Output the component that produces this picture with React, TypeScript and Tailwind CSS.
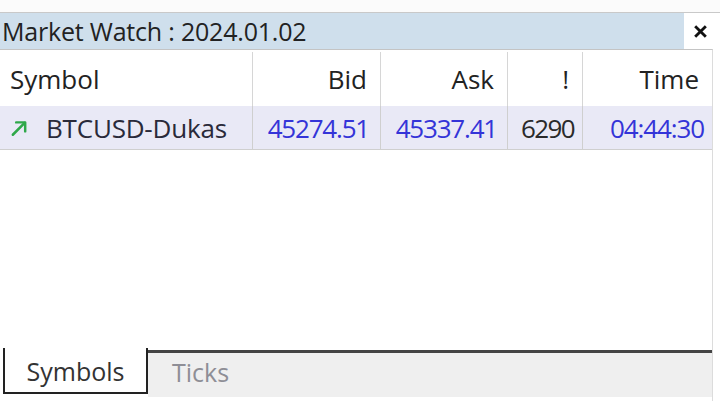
const font = { fontFamily: '"Open Sans", "Noto Sans", sans-serif' };

function UpArrow() {
  return (
    <svg width="18" height="18" viewBox="0 0 16 16" className="shrink-0">
      <path d="M2.5 14 L13 3.5" stroke="#2fa84a" strokeWidth="2.2" strokeLinecap="round" fill="none" />
      <path d="M5.5 3 H13.5 V11" stroke="#2fa84a" strokeWidth="2.2" strokeLinecap="round" strokeLinejoin="round" fill="none" />
    </svg>
  );
}

const cols = [
  { label: "Bid", w: "w-[128px]" },
  { label: "Ask", w: "w-[127px]" },
  { label: "!", w: "w-[75px]" },
  { label: "Time", w: "w-[130px]" },
];

export default function App() {
  return (
    <div className="w-[720px] h-[401px] bg-white flex flex-col overflow-hidden text-[#222]" style={font}>
      <div className="h-[13px] bg-[#fbfbfb] border-b border-[#c9c9c9] shrink-0" />
      <div className="h-[36px] flex items-stretch shrink-0">
        <div className="w-[684px] bg-[#cfdfec] flex items-center pl-[2px] text-[25px] leading-none tracking-[-0.2px]">
          Market Watch : 2024.01.02
        </div>
        <div className="flex-1 flex items-center justify-center pr-[4px]">
          <svg width="13" height="13" viewBox="0 0 12 12">
            <path d="M2 2 L10 10 M10 2 L2 10" stroke="#111" strokeWidth="2.6" strokeLinecap="square" />
          </svg>
        </div>
      </div>
      <div className="flex-1 flex flex-col w-[713px] border-r border-[#dcdcdc] border-t border-t-[#c4c4c4]">
        <div className="h-[56px] flex text-[26px] leading-none pt-[2px]">
          <div className="w-[252px] flex items-center pl-[10px]">Symbol</div>
          {cols.map((c) => (
            <div key={c.label} className={`${c.w} border-l border-[#d6d6d6] flex items-center justify-end pr-[13px]`}>
              {c.label}
            </div>
          ))}
        </div>
        <div className="h-[44px] flex bg-[#e9e9f6] border-b border-[#cfcfcf] text-[26px] leading-none">
          <div className="w-[252px] flex items-center pl-[10px] gap-[18px] pt-[1px]">
            <UpArrow />
            <span className="text-[#2a2a3a] tracking-[-0.2px]">BTCUSD-Dukas</span>
          </div>
          <div className="w-[128px] border-l border-[#cfcfcf] flex items-center justify-end pr-[11px] text-[#3434d8] tracking-[-1.2px]">45274.51</div>
          <div className="w-[127px] border-l border-[#cfcfcf] flex items-center justify-end pr-[10px] text-[#3434d8] tracking-[-1.2px]">45337.41</div>
          <div className="w-[75px] border-l border-[#cfcfcf] flex items-center justify-end pr-[8px] text-[#2a2a2a] tracking-[-1.6px]">6290</div>
          <div className="w-[130px] border-l border-[#cfcfcf] flex items-center justify-end pr-[8px] text-[#3434d8] tracking-[-1.1px]">04:44:30</div>
        </div>
        <div className="flex-1" />
        <div className="h-[47px] flex items-start">
          <div className="ml-[3px] w-[145px] h-[46px] border-l-2 border-b-2 border-r-2 border-[#222] bg-white flex items-center justify-center text-[25px] leading-none text-[#333] -mt-[2px] pt-[2px]">
            Symbols
          </div>
          <div className="flex-1 h-[47px] border-t-[3px] border-[#444] bg-[#efefef] flex items-center pl-[24px] pb-[5px] text-[25px] leading-none text-[#8e8e96]">
            Ticks
          </div>
        </div>
        <div className="h-[4px]" />
      </div>
    </div>
  );
}
